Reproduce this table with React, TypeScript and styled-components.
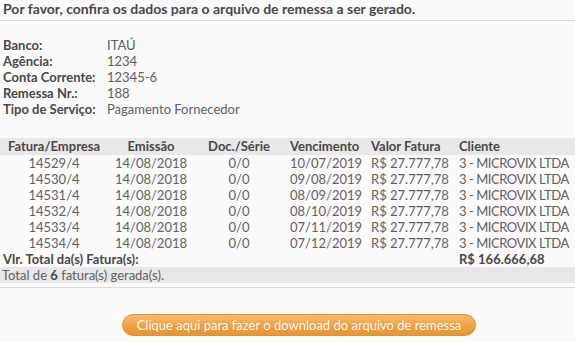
import React from "react"
import styled, {createGlobalStyle} from "styled-components"

const GlobalStyle = createGlobalStyle`
  html, body {
    margin: 0;
    padding: 0;
    background: #fafafa;
  }
  body {
    font-family: Lato, "Open Sans", sans-serif;
    font-size: 13px;
    color: #5a5a5a;
  }
`

const Page = styled.div`
  width: 575px;
  height: 342px;
  overflow: hidden;
`

const Title = styled.div`
  font-size: 14px;
  font-weight: 700;
  color: #484848;
  line-height: 17px;
  padding: 0 3px 3px;
  border-bottom: 1px solid #dadada;
`

const Info = styled.div`
  margin-top: 16px;
  padding: 0 3px;
  display: grid;
  grid-template-columns: 104px 1fr;
  line-height: 16px;
`

const Label = styled.div`
  font-weight: 700;
  color: #484848;
`

const Value = styled.div`
  color: #606060;
`

const Table = styled.div`
  margin-top: 21px;
`

const Row = styled.div<{$head?: boolean}>`
  display: grid;
  grid-template-columns: 108px 86px 90px 87px 88px 1fr;
  height: ${p => (p.$head ? "17px" : "16px")};
  line-height: ${p => (p.$head ? "17px" : "16px")};
  background: ${p => (p.$head ? "#e8e8e8" : "transparent")};
  font-weight: ${p => (p.$head ? 700 : 400)};
  color: ${p => (p.$head ? "#484848" : "#606060")};
`

const Cell = styled.div<{$align?: "center" | "left"; $pad?: number; $tight?: boolean}>`
  text-align: ${p => p.$align || "left"};
  padding-left: ${p => p.$pad || 0}px;
  letter-spacing: ${p => (p.$tight ? "-0.45px" : "normal")};
  white-space: nowrap;
`

const TotalRow = styled.div`
  display: grid;
  grid-template-columns: 456px 1fr;
  height: 16px;
  line-height: 16px;
  font-weight: 700;
  color: #484848;
  padding-left: 3px;
`

const Footer = styled.div`
  height: 16px;
  line-height: 16px;
  background: #e8e8e8;
  padding-left: 2px;
  color: #606060;
  b {
    color: #484848;
  }
`

const Divider = styled.div`
  margin-top: 4px;
  border-top: 1px solid #dadada;
`

const ButtonWrap = styled.div`
  display: flex;
  justify-content: center;
  padding-left: 23px;
  margin-top: 26px;
`

const DownloadButton = styled.button`
  width: 354px;
  height: 22px;
  border-radius: 11px;
  border: 1px solid #e0923a;
  background: linear-gradient(#f6bb69, #eda044 60%, #e9952f);
  color: #fff;
  font-family: Lato, "Open Sans", sans-serif;
  font-size: 13px;
  line-height: 20px;
  padding: 0;
  text-shadow: 0 0 1px rgba(150, 80, 0, 0.4);
  cursor: pointer;
`

const faturas = [
  ["14529/4", "10/07/2019"],
  ["14530/4", "09/08/2019"],
  ["14531/4", "08/09/2019"],
  ["14532/4", "08/10/2019"],
  ["14533/4", "07/11/2019"],
  ["14534/4", "07/12/2019"],
]

export default function App() {
  return (
    <Page>
      <GlobalStyle />
      <Title>Por favor, confira os dados para o arquivo de remessa a ser gerado.</Title>
      <Info>
        <Label>Banco:</Label>
        <Value>ITAÚ</Value>
        <Label>Agência:</Label>
        <Value>1234</Value>
        <Label>Conta Corrente:</Label>
        <Value>12345-6</Value>
        <Label>Remessa Nr.:</Label>
        <Value>188</Value>
        <Label>Tipo de Serviço:</Label>
        <Value>Pagamento Fornecedor</Value>
      </Info>
      <Table>
        <Row $head>
          <Cell $align="center">Fatura/Empresa</Cell>
          <Cell $align="center">Emissão</Cell>
          <Cell $align="center">Doc./Série</Cell>
          <Cell $pad={6}>Vencimento</Cell>
          <Cell>Valor Fatura</Cell>
          <Cell>Cliente</Cell>
        </Row>
        {faturas.map(([fatura, venc]) => (
          <Row key={fatura}>
            <Cell $align="center">{fatura}</Cell>
            <Cell $align="center">14/08/2018</Cell>
            <Cell $align="center">0/0</Cell>
            <Cell $pad={6}>{venc}</Cell>
            <Cell>R$ 27.777,78</Cell>
            <Cell $tight>3 - MICROVIX LTDA</Cell>
          </Row>
        ))}
        <TotalRow>
          <div>Vlr. Total da(s) Fatura(s):</div>
          <div>R$ 166.666,68</div>
        </TotalRow>
        <Footer>
          Total de <b>6</b> fatura(s) gerada(s).
        </Footer>
      </Table>
      <Divider />
      <ButtonWrap>
        <DownloadButton>Clique aqui para fazer o download do arquivo de remessa</DownloadButton>
      </ButtonWrap>
    </Page>
  )
}
